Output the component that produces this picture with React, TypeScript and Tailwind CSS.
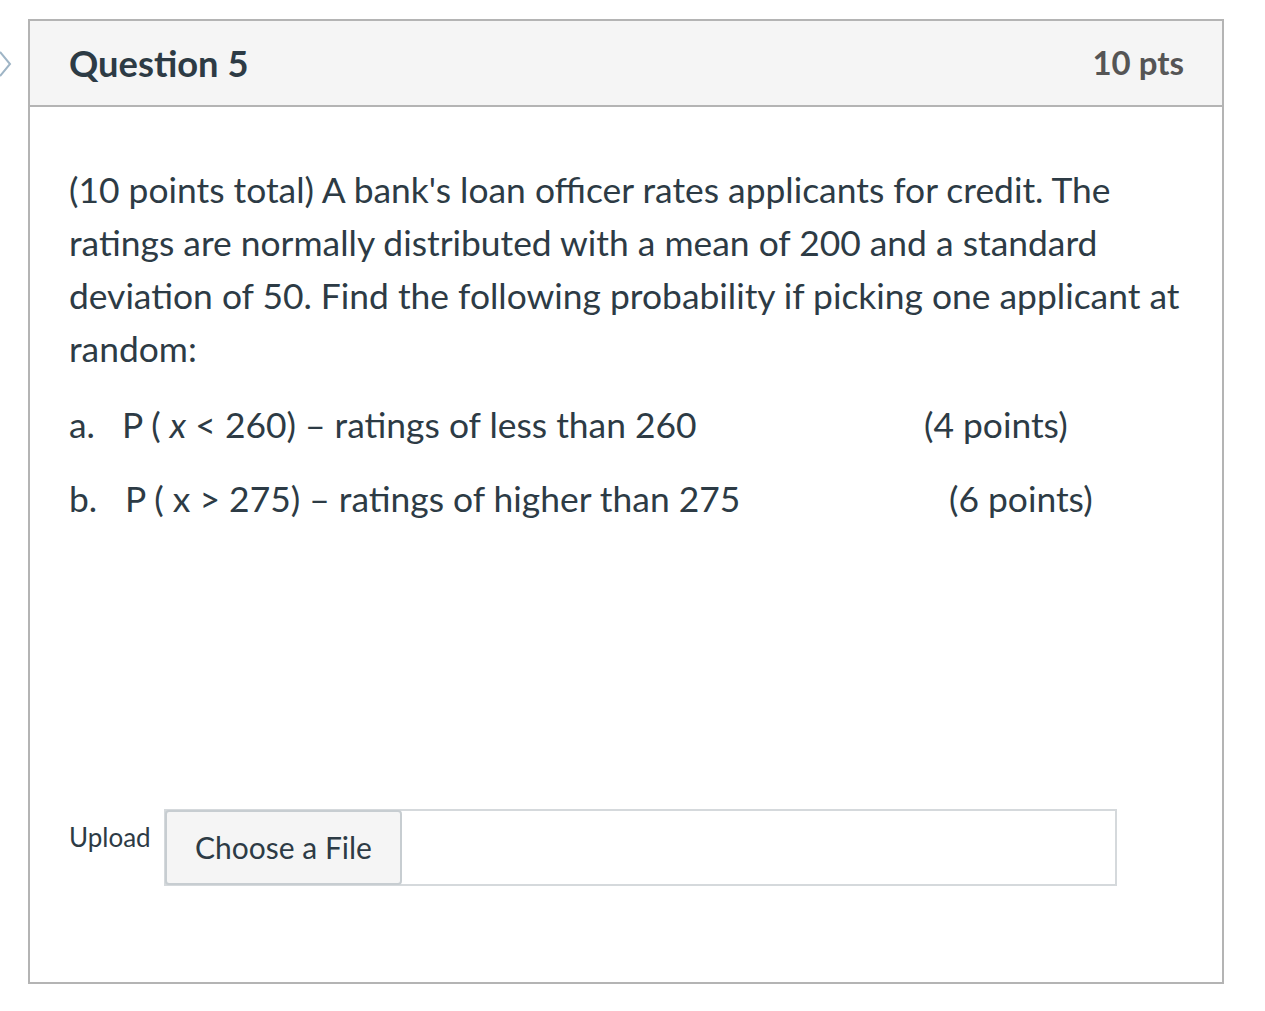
import React from 'react';

export default function App() {
  return (
    <div className="relative min-h-[1011px] w-[1265px] bg-white text-[#2d3b45]" style={{ fontFamily: 'Lato, "Open Sans", sans-serif' }}>
      {/* collapse arrow peeking at the left edge */}
      <svg className="absolute left-[-4px] top-[50px]" width="18" height="28" viewBox="0 0 18 28">
        <path d="M4 2 L14 14 L4 26" fill="none" stroke="#9fb5c6" strokeWidth="2" />
      </svg>

      <div className="pl-[28px] pt-[19px]">
        <div className="w-[1196px] border-2 border-[#b4b4b4]">
          {/* Header */}
          <div className="flex h-[86px] items-center justify-between border-b-2 border-[#b4b4b4] bg-[#f5f5f5] pl-[39px] pr-[38px]">
            <h2 className="text-[36.3px] font-bold">Question 5</h2>
            <span className="text-[33px] font-bold text-[#555555]">10 pts</span>
          </div>

          {/* Body */}
          <div className="h-[875px] pl-[39px] pr-[30px] pt-[56px]">
            <p className="text-[35.4px] leading-[53px]">
              (10 points total) A bank's loan officer rates applicants for credit. The ratings are normally distributed with a mean of 200 and a standard deviation of 50. Find the following probability if picking one applicant at random:
            </p>

            <div className="mt-[23px] flex flex-col gap-[21px] text-[35.4px] leading-[53px]">
              <div className="flex whitespace-nowrap">
                <span className="w-[53px]">a.</span>
                <span className="w-[802px]">P ( <i>x</i> &lt; 260) – ratings of less than 260</span>
                <span>(4 points)</span>
              </div>
              <div className="flex whitespace-nowrap">
                <span className="w-[56px]">b.</span>
                <span className="w-[824px]">P ( x &gt; 275) – ratings of higher than 275</span>
                <span>(6 points)</span>
              </div>
            </div>

            <div className="mt-[284px] flex items-start">
              <span className="mt-[9px] w-[95px] text-[26px]">Upload</span>
              <div className="flex h-[77px] w-[953px] items-stretch border-2 border-[#d5d9dc]">
                <button className="-my-[1px] -ml-[1px] rounded-[4px] border-2 border-[#c7cdd1] bg-[#f5f5f5] px-[28px] text-[30px] text-[#2d3b45]">
                  Choose a File
                </button>
              </div>
            </div>
          </div>
        </div>
      </div>
    </div>
  );
}
